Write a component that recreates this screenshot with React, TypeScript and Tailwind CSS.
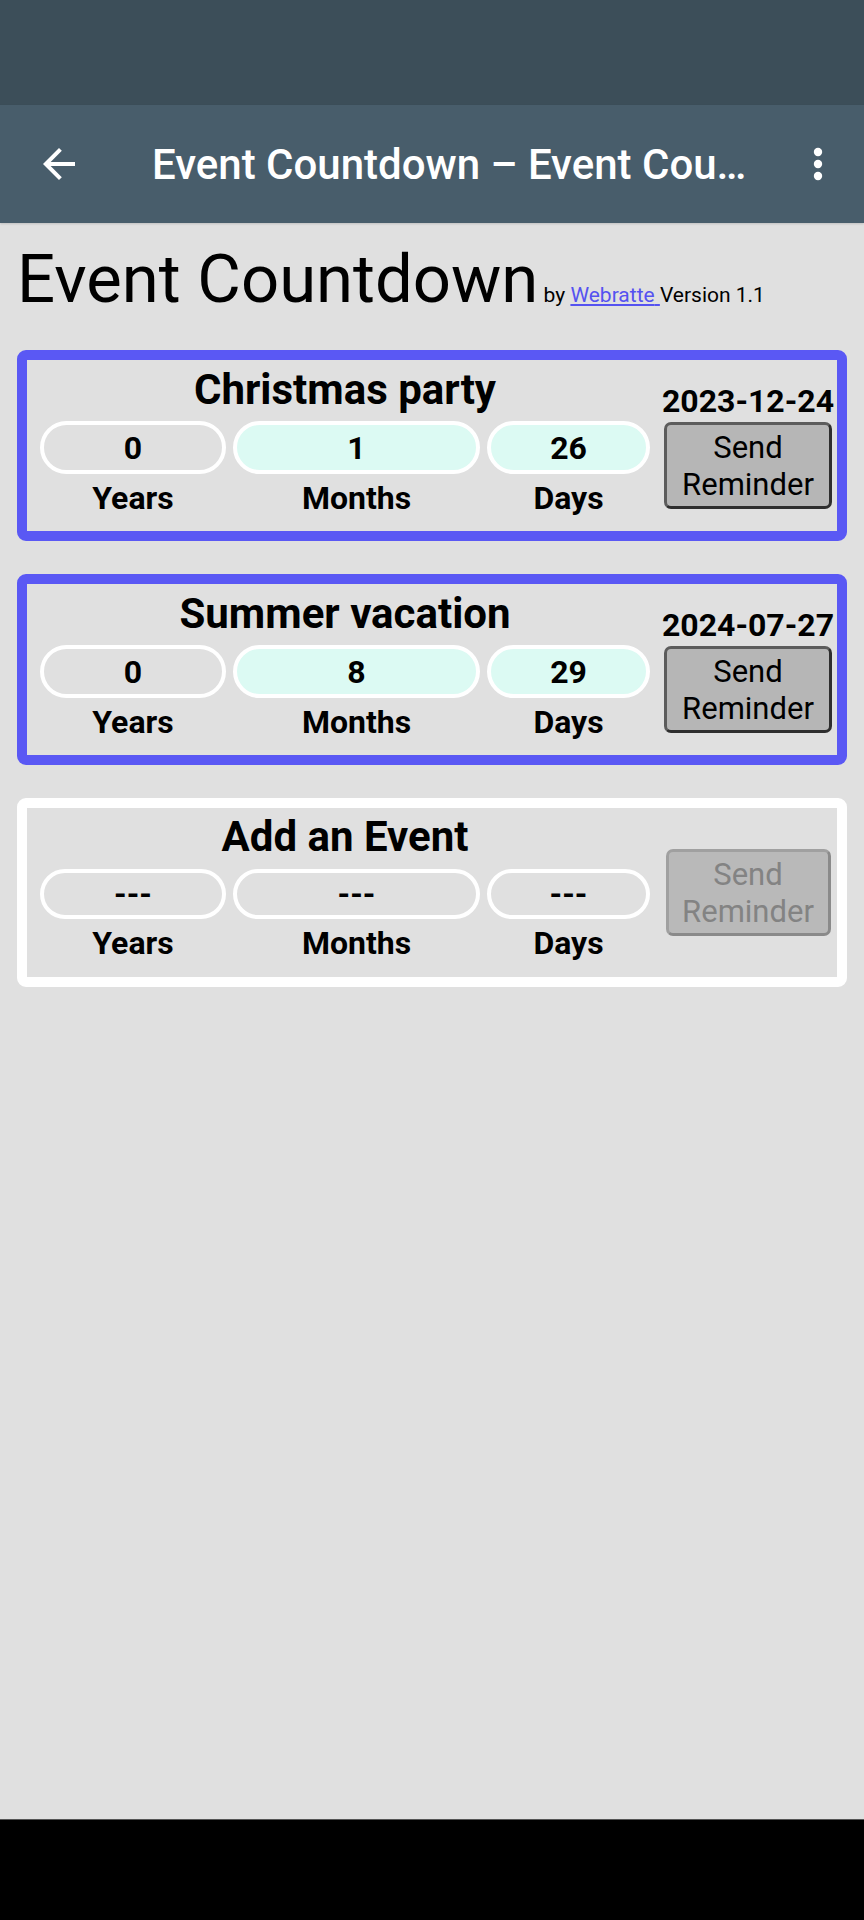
import React from 'react';

type Countdown = {
  title: string;
  date?: string;
  years: string;
  months: string;
  days: string;
  active: boolean;
};

const events: Countdown[] = [
  { title: 'Christmas party', date: '2023-12-24', years: '0', months: '1', days: '26', active: true },
  { title: 'Summer vacation', date: '2024-07-27', years: '0', months: '8', days: '29', active: true },
  { title: 'Add an Event', years: '---', months: '---', days: '---', active: false },
];

const BackIcon = () => (
  <svg viewBox="0 0 24 24" className="h-[48px] w-[48px] shrink-0" fill="white">
    <path d="M20 11H7.83l5.59-5.59L12 4l-8 8 8 8 1.41-1.41L7.83 13H20v-2z" />
  </svg>
);

const MoreIcon = () => (
  <svg viewBox="0 0 24 24" className="h-[48px] w-[48px] shrink-0" fill="white">
    <circle cx="12" cy="6" r="2.1" />
    <circle cx="12" cy="12" r="2.1" />
    <circle cx="12" cy="18" r="2.1" />
  </svg>
);

const EventCard: React.FC<{ ev: Countdown }> = ({ ev }) => {
  const pillH = ev.active ? 'h-[53px]' : 'h-[50px]';
  const mint = ev.active ? 'bg-[#dcfaf3]' : 'bg-[#e0e0e0]';
  const pill = `flex ${pillH} items-center justify-center rounded-full border-4 border-white text-[32px] font-bold`;
  return (
    <div
      className={`flex items-center rounded-[9px] border-[10px] ${
        ev.active ? 'border-[#5a58f4]' : 'border-white'
      }`}
    >
      <div
        className={`grid grid-cols-[186px_247px_163px] gap-x-[7px] pl-[13px] ${
          ev.active ? 'pt-[5px] pb-[14px]' : 'pt-[4px] pb-[15px]'
        }`}
      >
        <div className="col-span-3 text-center text-[42px] font-bold">{ev.title}</div>
        <div className={`${ev.active ? 'mt-[7px]' : 'mt-[8px]'} ${pill} bg-[#e0e0e0]`}>{ev.years}</div>
        <div className={`${ev.active ? 'mt-[7px]' : 'mt-[8px]'} ${pill} ${mint}`}>{ev.months}</div>
        <div className={`${ev.active ? 'mt-[7px]' : 'mt-[8px]'} ${pill} ${mint}`}>{ev.days}</div>
        <div className="mt-[5px] text-center text-[32px] font-bold">Years</div>
        <div className="mt-[5px] text-center text-[32px] font-bold">Months</div>
        <div className="mt-[5px] text-center text-[32px] font-bold">Days</div>
      </div>
      <div className="ml-[14px] flex w-[168px] flex-col items-center">
        {ev.date && <div className="mb-[2px] whitespace-nowrap text-[32px] font-bold">{ev.date}</div>}
        {ev.active ? (
          <button className="h-[87px] w-[168px] rounded-[7px] border-[3px] border-[#5c5c5c] border-r-[#2e2e2e] border-b-[#2e2e2e] bg-[#b6b6b6] text-[31px] leading-[37px] text-black">
            Send
            <br />
            Reminder
          </button>
        ) : (
          <button
            disabled
            className="h-[87px] w-[165px] rounded-[7px] border-[3px] border-[#a0a0a0] border-r-[#8a8a8a] border-b-[#8a8a8a] bg-[#b9b9b9] text-[31px] leading-[37px] text-[#838383]"
          >
            Send
            <br />
            Reminder
          </button>
        )}
      </div>
    </div>
  );
};

export default function App() {
  return (
    <div className="flex h-[1920px] w-full flex-col bg-[#e0e0e0] font-['Roboto',sans-serif] leading-[normal] text-black">
      <div className="h-[105px] bg-[#3c4e59]" />
      <div className="flex h-[118px] items-center bg-[#485d6b] pl-[35px] pr-[22px] shadow-[0_1px_2px_rgba(0,0,0,0.15)]">
        <BackIcon />
        <div className="ml-[69px] mr-[40px] min-w-0 flex-1 truncate text-[42px] font-medium text-white">
          Event Countdown – Event Countdown
        </div>
        <MoreIcon />
      </div>
      <div className="flex-1 px-[17px]">
        <h1 className="mt-[17px] text-[67px] font-normal">
          Event Countdown
          <span className="text-[21px]">
            {' '}by{' '}
            <a href="#" className="text-[#5552f0] underline">
              Webratte{' '}
            </a>
            Version 1.1
          </span>
        </h1>
        <div className="mt-[32px] flex flex-col gap-[33px]">
          {events.map((ev) => (
            <EventCard key={ev.title} ev={ev} />
          ))}
        </div>
      </div>
      <div className="h-[101px] border-t border-[#555] bg-black" />
    </div>
  );
}
